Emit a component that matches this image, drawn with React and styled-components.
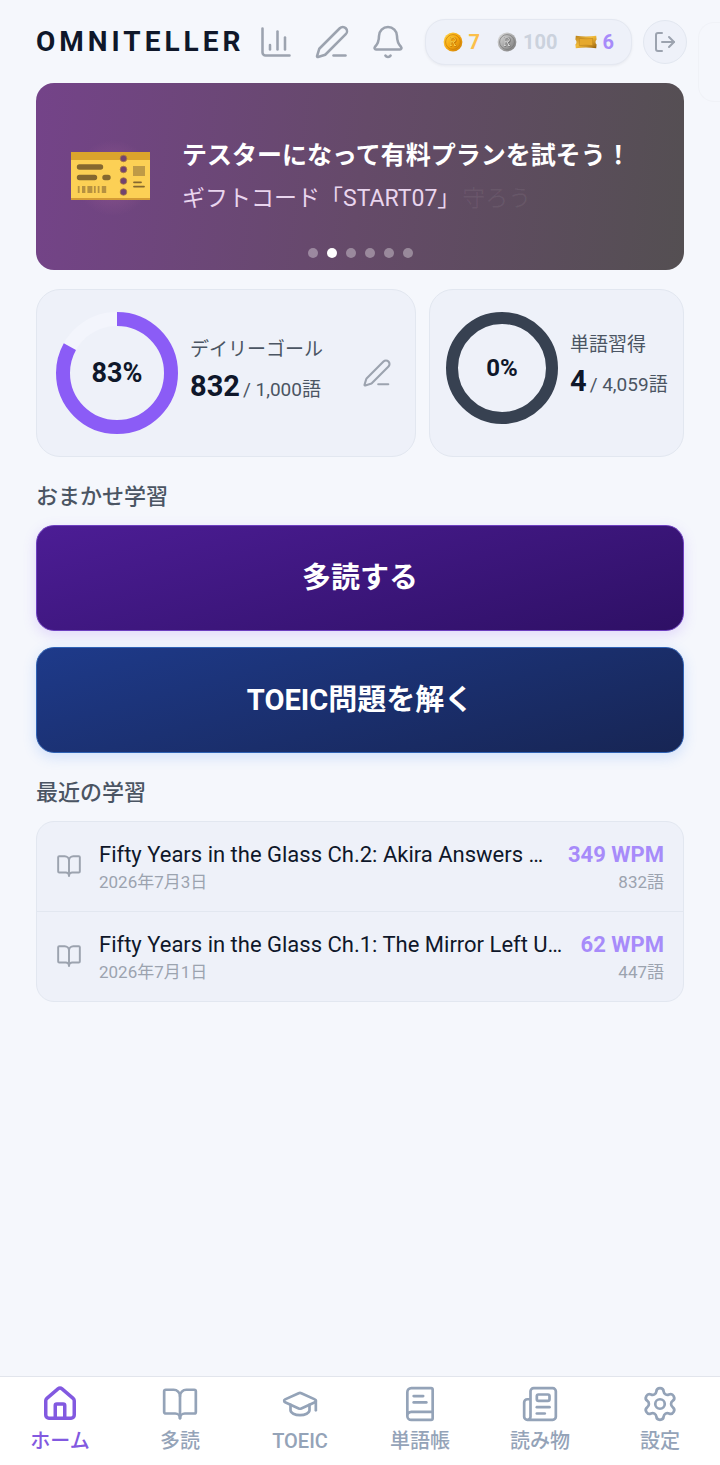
import React from "react";
import styled, { createGlobalStyle, css } from "styled-components";
import {
  Bell,
  BookOpen,
  BookText,
  ChartColumn,
  GraduationCap,
  House,
  LogOut,
  Newspaper,
  PenLine,
  Settings,
} from "lucide-react";

const GlobalStyle = createGlobalStyle`
  * {
    box-sizing: border-box;
  }

  body {
    margin: 0;
    color: #0f172a;
    background: #f5f7fc;
    font-family: Roboto, "Noto Sans CJK JP", sans-serif;
  }

  button {
    font-family: inherit;
    cursor: pointer;
  }
`;

const Page = styled.div`
  position: relative;
  display: flex;
  flex-direction: column;
  min-height: 100vh;
`;

/* Edge of the drawer that peeks in over the page */
const DrawerEdge = styled.div`
  position: absolute;
  top: 22px;
  right: 0;
  width: 22px;
  height: 80px;
  border: 1px solid #f0f2f7;
  border-right: none;
  border-radius: 16px 0 0 16px;
`;

const Main = styled.main`
  flex: 1;
  padding: 18px 36px;
`;

const Header = styled.header`
  display: flex;
  align-items: center;
  height: 48px;
  margin-right: -3px;
`;

const Logo = styled.h1`
  margin: 0;
  font-size: 28px;
  font-weight: 700;
  line-height: 32px;
  letter-spacing: 4px;
`;

const HeaderIcons = styled.div`
  display: flex;
  flex: 1;
  gap: 20px;
  margin-left: 14px;
`;

const IconButton = styled.button`
  display: flex;
  padding: 0;
  border: none;
  background: none;
  color: #9ca3af;
`;

const EditButton = styled(IconButton)`
  margin-right: 4px;
`;

const LogoutButton = styled(IconButton)`
  align-items: center;
  justify-content: center;
  width: 44px;
  height: 44px;
  margin-left: 11px;
  border: 1px solid #e2e7f0;
  border-radius: 50%;
  background: #eef1f9;
`;

const Wallet = styled.div`
  display: flex;
  align-items: center;
  gap: 17px;
  height: 46px;
  padding: 0 17px;
  border: 1px solid #e4e8f1;
  border-radius: 20px;
  background: #eef1f9;
  box-shadow: 0 1px 3px rgba(15, 23, 42, 0.06);
`;

const Balance = styled.span`
  display: flex;
  align-items: center;
  gap: 6px;
  color: ${({ color }) => color};
  font-size: 20px;
  font-weight: 700;
  line-height: 24px;
`;

const Banner = styled.section`
  position: relative;
  display: flex;
  align-items: center;
  gap: 30px;
  height: 187px;
  margin-top: 17px;
  padding: 2px 34px 0;
  border-radius: 18px;
  background: linear-gradient(97deg, #744389 0%, #654a69 50%, #544f52 100%);
`;

const BannerTitle = styled.h2`
  margin: 0;
  color: #fff;
  font-size: 25px;
  font-weight: 700;
  line-height: 42px;
`;

const BannerText = styled.p`
  margin: 0;
  color: #e9d5ee;
  font-size: 23px;
  line-height: 44px;
`;

const FadingText = styled.span`
  margin-left: 2px;
  color: rgba(255, 255, 255, 0.06);
`;

const Dots = styled.div`
  position: absolute;
  right: 0;
  bottom: 12px;
  left: 0;
  display: flex;
  justify-content: center;
  gap: 9px;
`;

const Dot = styled.button`
  width: 10px;
  height: 10px;
  padding: 0;
  border: none;
  border-radius: 50%;
  background: ${({ $active }) => ($active ? "#fff" : "rgba(255, 255, 255, 0.35)")};
`;

const Stats = styled.div`
  display: grid;
  grid-template-columns: minmax(0, 380fr) minmax(0, 255fr);
  gap: 13px;
  margin-top: 19px;
`;

const panel = css`
  border: 1px solid #e2e7f0;
  background: #eef1f9;
`;

const StatCard = styled.section`
  ${panel}
  display: flex;
  align-items: flex-start;
  gap: 12px;
  height: 168px;
  padding: 22px ${({ $side }) => $side}px;
  border-radius: 24px;

  > svg {
    flex: none;
  }
`;

const StatBody = styled.div`
  display: flex;
  flex: 1;
  align-items: center;
  justify-content: space-between;
  height: ${({ $height }) => $height}px;
`;

const StatLabel = styled.h3`
  margin: 0 0 2px;
  color: #4b5563;
  font-size: 19px;
  font-weight: 400;
  line-height: 28px;
`;

const StatValue = styled.p`
  margin: 0;
  color: #4b5563;
  font-size: 19px;
  line-height: 40px;
  white-space: nowrap;

  strong {
    margin-right: 3px;
    color: #0f172a;
    font-size: 29px;
  }
`;

const RingText = styled.text`
  fill: #0f172a;
  font-weight: 700;
  text-anchor: middle;
`;

const SectionTitle = styled.h2`
  margin: 24px 0 12px;
  color: #4b5563;
  font-size: 22px;
  font-weight: 500;
  line-height: 32px;
`;

const StudyButton = styled.button`
  display: block;
  width: 100%;
  height: 106px;
  margin-bottom: 16px;
  padding: 0 0 6px;
  border: 1px solid ${({ $border }) => $border};
  border-radius: 18px;
  background: ${({ $fill }) => $fill};
  box-shadow: 0 4px 14px ${({ $glow }) => $glow};
  color: #fff;
  font-size: 29px;
  font-weight: 700;
`;

const History = styled.ul`
  ${panel}
  margin: 0;
  padding: 0;
  border-radius: 18px;
  list-style: none;
`;

const HistoryItem = styled.li`
  display: flex;
  align-items: center;
  gap: 14px;
  padding: 17px 19px 18px;
  color: #9ca3af;

  & + & {
    border-top: 1px solid #e2e7f0;
  }

  svg {
    flex: none;
    margin-right: 3px;
  }
`;

const HistoryMain = styled.div`
  flex: 1;
  min-width: 0;
`;

const HistoryTitle = styled.p`
  margin: 0;
  overflow: hidden;
  color: #0f172a;
  font-size: 22px;
  line-height: 32px;
  text-overflow: ellipsis;
  white-space: nowrap;
`;

const HistoryMeta = styled.p`
  margin: 0;
  font-size: 17px;
  line-height: 22px;
`;

const HistoryScore = styled.div`
  text-align: right;
`;

const Speed = styled.p`
  margin: 0;
  color: #a78bfa;
  font-size: 22px;
  font-weight: 700;
  line-height: 32px;
`;

const TabBar = styled.nav`
  display: grid;
  grid-template-columns: repeat(6, 1fr);
  height: 89px;
  padding-top: 8px;
  border-top: 1px solid #e2e5ec;
  background: #fff;
`;

const Tab = styled.a`
  display: flex;
  flex-direction: column;
  align-items: center;
  gap: 3px;
  color: ${({ $active }) => ($active ? "#8259e0" : "#94a3b8")};
  font-size: 20px;
  font-weight: 500;
  line-height: 30px;
  text-decoration: none;
`;

const Coin = ({ name, light, mid, dark }) => (
  <svg width="20" height="20" viewBox="0 0 20 20" aria-label={name}>
    <defs>
      <linearGradient id={name} x1="0" y1="0" x2="1" y2="1">
        <stop offset="0" stopColor={light} />
        <stop offset="0.5" stopColor={mid} />
        <stop offset="1" stopColor={dark} />
      </linearGradient>
    </defs>
    <circle cx="10" cy="10" r="9.4" fill={`url(#${name})`} />
    <circle cx="10" cy="10" r="7.4" fill="none" stroke={dark} strokeWidth="0.7" />
    <path
      d="M7.4 14h1.8M11.4 14h2M8.3 14V6.2h2.5a2 2 0 0 1 0 4H8.3M10.4 10.2l2 3.8"
      fill="none"
      stroke={dark}
      strokeWidth="1.9"
    />
    <path
      d="M7 13.6h1.8M11 13.6h2M7.9 13.6V5.8h2.5a2 2 0 0 1 0 4H7.9M10 9.8l2 3.8"
      fill="none"
      stroke={light}
      strokeWidth="0.9"
    />
  </svg>
);

const GoldTicket = () => (
  <svg width="22" height="14" viewBox="0 0 22 14" aria-label="チケット">
    <defs>
      <linearGradient id="gold-ticket" x1="0" y1="0" x2="1" y2="1">
        <stop offset="0" stopColor="#b9811c" />
        <stop offset="0.45" stopColor="#f3bd3c" />
        <stop offset="0.7" stopColor="#cf9524" />
        <stop offset="1" stopColor="#8f5c0c" />
      </linearGradient>
    </defs>
    <path
      d="M0.8 0.8Q11 2.2 21.2 0.8L21.6 4.4Q19.4 7 21.6 9.6L21.2 13.2Q11 11.8 0.8 13.2L0.4 9.6Q2.6 7 0.4 4.4Z"
      fill="url(#gold-ticket)"
    />
    <path d="M4.3 3.4Q11 4.2 17.7 3.4V10.6Q11 9.8 4.3 10.6Z" fill="#e6a92e" stroke="#b57d1b" strokeWidth="0.5" />
  </svg>
);

const BannerTicket = () => (
  <svg width="82" height="82" viewBox="0 2 82 82" aria-hidden="true">
    <defs>
      <radialGradient id="ticket-glow">
        <stop offset="0" stopColor="#b56aa0" stopOpacity="0.4" />
        <stop offset="1" stopColor="#b56aa0" stopOpacity="0" />
      </radialGradient>
    </defs>
    <circle cx="43" cy="43" r="38" fill="url(#ticket-glow)" />
    <path d="M1 17h79v48H1z" fill="#fcd055" />
    <path d="M1 17h79v8H1z" fill="#dba42c" />
    <path d="M1 63h79v2H1z" fill="#d49b35" />
    <g stroke="#85682f" strokeWidth="5.4" strokeLinecap="round">
      <path d="M9.5 32h21M9.5 42.5h15M35 42.5h3" />
    </g>
    <path d="M8.7 51v7M24.8 51v7M28.6 51v7" stroke="#b69140" strokeWidth="1.8" />
    <path d="M12 51h3.4v7H12zM17.4 51h5v7h-5zM31.8 51h4.4v7h-4.4z" fill="#b69140" />
    <g fill="#72436f" stroke="#a87943" strokeWidth="0.8">
      <circle cx="53.5" cy="23.5" r="3.3" />
      <circle cx="53.5" cy="34.5" r="3.3" />
      <circle cx="53.5" cy="46" r="3.3" />
      <circle cx="53.5" cy="57" r="3.3" />
    </g>
    <path d="M63 31h12v10H63z" fill="#bf9a46" />
    <path d="M64 47.3h7M64 51.6h10" stroke="#85682f" strokeWidth="1.8" strokeLinecap="round" />
  </svg>
);

const Ring = ({ size, stroke, percent, color, track, fontSize }) => {
  const r = (size - stroke) / 2;
  const length = 2 * Math.PI * r;
  const mid = size / 2;

  return (
    <svg width={size} height={size} viewBox={`0 0 ${size} ${size}`}>
      <circle cx={mid} cy={mid} r={r} fill="none" stroke={track} strokeWidth={stroke} />
      <circle
        cx={mid}
        cy={mid}
        r={r}
        fill="none"
        stroke={color}
        strokeWidth={stroke}
        strokeDasharray={`${(length * percent) / 100} ${length}`}
        transform={`rotate(-90 ${mid} ${mid})`}
      />
      <RingText x={mid} y={mid + fontSize / 3} fontSize={fontSize}>
        {percent}%
      </RingText>
    </svg>
  );
};

const history = [
  {
    title: "Fifty Years in the Glass Ch.2: Akira Answers …",
    date: "2026年7月3日",
    speed: 349,
    words: 832,
  },
  {
    title: "Fifty Years in the Glass Ch.1: The Mirror Left U…",
    date: "2026年7月1日",
    speed: 62,
    words: 447,
  },
];

const tabs = [
  { label: "ホーム", icon: House, active: true },
  { label: "多読", icon: BookOpen },
  { label: "TOEIC", icon: GraduationCap },
  { label: "単語帳", icon: BookText },
  { label: "読み物", icon: Newspaper },
  { label: "設定", icon: Settings },
];

const App = () => {
  return (
    <>
      <GlobalStyle />
      <Page>
        <DrawerEdge />
        <Main>
          <Header>
            <Logo>OMNITELLER</Logo>
            <HeaderIcons>
              <IconButton aria-label="統計">
                <ChartColumn size={36} strokeWidth={1.7} />
              </IconButton>
              <IconButton aria-label="メモ">
                <PenLine size={36} strokeWidth={1.7} />
              </IconButton>
              <IconButton aria-label="お知らせ">
                <Bell size={36} strokeWidth={1.7} />
              </IconButton>
            </HeaderIcons>
            <Wallet>
              <Balance color="#fbbf4a">
                <Coin name="gold" light="#ffd84a" mid="#f7a90f" dark="#c97a06" />7
              </Balance>
              <Balance color="#cbd2dd">
                <Coin name="silver" light="#e3e3e3" mid="#a9a9a9" dark="#767676" />
                100
              </Balance>
              <Balance color="#a78bfa">
                <GoldTicket />6
              </Balance>
            </Wallet>
            <LogoutButton aria-label="ログアウト">
              <LogOut size={24} strokeWidth={2} />
            </LogoutButton>
          </Header>

          <Banner>
            <BannerTicket />
            <div>
              <BannerTitle>テスターになって有料プランを試そう！</BannerTitle>
              <BannerText>
                ギフトコード「START07」
                <FadingText aria-hidden="true">守ろう</FadingText>
              </BannerText>
            </div>
            <Dots>
              {[0, 1, 2, 3, 4, 5].map((i) => (
                <Dot key={i} $active={i === 1} aria-label={`スライド${i + 1}`} />
              ))}
            </Dots>
          </Banner>

          <Stats>
            <StatCard $side={19}>
              <Ring size={122} stroke={14} percent={83} color="#8b5cf6" track="#f3f5fc" fontSize={27} />
              <StatBody $height={122}>
                <div>
                  <StatLabel>デイリーゴール</StatLabel>
                  <StatValue>
                    <strong>832</strong>/ 1,000語
                  </StatValue>
                </div>
                <EditButton aria-label="目標を編集">
                  <PenLine size={30} strokeWidth={1.7} />
                </EditButton>
              </StatBody>
            </StatCard>
            <StatCard $side={16}>
              <Ring size={112} stroke={12} percent={0} color="#8b5cf6" track="#374151" fontSize={24} />
              <StatBody $height={112}>
                <div>
                  <StatLabel>単語習得</StatLabel>
                  <StatValue>
                    <strong>4</strong>/ 4,059語
                  </StatValue>
                </div>
              </StatBody>
            </StatCard>
          </Stats>

          <SectionTitle>おまかせ学習</SectionTitle>
          <StudyButton
            $fill="linear-gradient(165deg, #4c1d95, #2e1065)"
            $border="#6d3fc0"
            $glow="rgba(139, 92, 246, 0.2)"
          >
            多読する
          </StudyButton>
          <StudyButton
            $fill="linear-gradient(165deg, #1e3a8a, #172554)"
            $border="#2f62b5"
            $glow="rgba(59, 130, 246, 0.2)"
          >
            TOEIC問題を解く
          </StudyButton>

          <SectionTitle>最近の学習</SectionTitle>
          <History>
            {history.map((item) => (
              <HistoryItem key={item.title}>
                <BookOpen size={26} strokeWidth={1.8} />
                <HistoryMain>
                  <HistoryTitle>{item.title}</HistoryTitle>
                  <HistoryMeta>{item.date}</HistoryMeta>
                </HistoryMain>
                <HistoryScore>
                  <Speed>{item.speed} WPM</Speed>
                  <HistoryMeta>{item.words}語</HistoryMeta>
                </HistoryScore>
              </HistoryItem>
            ))}
          </History>
        </Main>

        <TabBar>
          {tabs.map(({ label, icon: Icon, active }) => (
            <Tab key={label} href="#" $active={active}>
              <Icon size={38} strokeWidth={active ? 2.2 : 1.7} />
              {label}
            </Tab>
          ))}
        </TabBar>
      </Page>
    </>
  );
};

export default App;
